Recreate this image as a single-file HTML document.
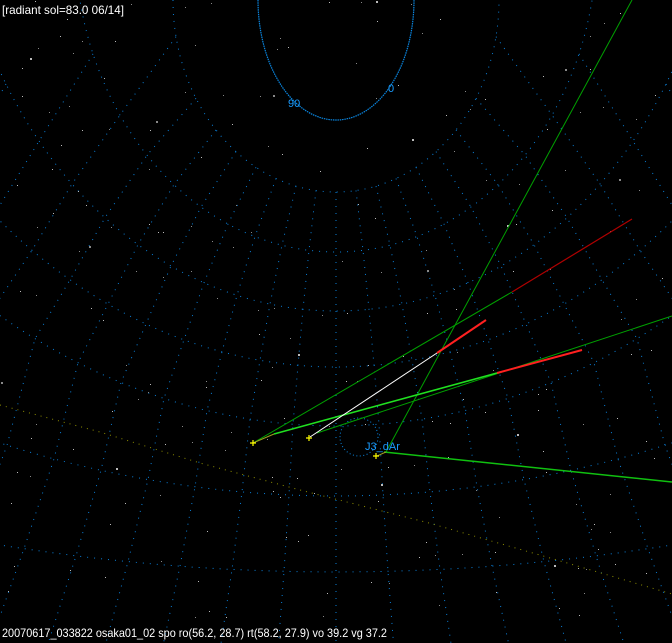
<!DOCTYPE html>
<html><head><meta charset="utf-8">
<style>
html,body{margin:0;padding:0;background:#000;width:672px;height:643px;overflow:hidden}
svg{display:block}
text{font-family:"Liberation Sans",sans-serif}
</style></head>
<body>
<svg id="s" width="672" height="643" viewBox="0 0 672 643" xmlns="http://www.w3.org/2000/svg">
<rect width="672" height="643" fill="#000"/>
<g id="grid" fill="none" stroke="#0a7fd8" stroke-width="1"></g>
<g id="stars" fill="#bbb"></g>
<polyline points="0,405 100,432 200,463 300,490 429,523 557,560 672,594" fill="none" stroke="#8c8c00" stroke-width="1" stroke-dasharray="1 5"/>
<path d="M258,0 A78,120 0 0 0 414,0" fill="none" stroke="#0a86e0" stroke-width="1.2" stroke-dasharray="1.5 0.8"/>
<circle cx="359" cy="437" r="19" fill="none" stroke="#0a86e0" stroke-dasharray="1 2.5"/>
<line x1="632" y1="0" x2="386" y2="452" stroke="#00a000" stroke-width="1"/>
<line x1="253" y1="443" x2="512" y2="292" stroke="#00a000" stroke-width="1"/>
<line x1="512" y1="292" x2="632" y2="219" stroke="#b00000" stroke-width="1.2"/>
<line x1="317" y1="433" x2="672" y2="316" stroke="#00a000" stroke-width="1"/>
<line x1="253" y1="443" x2="274" y2="434" stroke="#a0a020" stroke-width="1"/>
<line x1="274" y1="434" x2="497" y2="373" stroke="#20e020" stroke-width="1.6"/>
<line x1="497" y1="373" x2="582" y2="350" stroke="#ff2020" stroke-width="2"/>
<line x1="437" y1="353" x2="486" y2="320" stroke="#ff2020" stroke-width="2"/>
<line x1="310" y1="437" x2="437" y2="353" stroke="#fff" stroke-width="1"/>
<line x1="384" y1="452" x2="672" y2="482" stroke="#10c010" stroke-width="1.5"/>
<line x1="377" y1="456" x2="386" y2="452" stroke="#a0a020" stroke-width="1"/>
<g stroke="#ffff00" stroke-width="1.2">
<path d="M250,443h6M253,440v6"/><path d="M306,438h6M309,435v6"/><path d="M373,456h6M376,453v6"/>
</g>
<text x="288" y="107" font-size="11" fill="#1a9cff">90</text>
<text x="388" y="92" font-size="11" fill="#1a9cff">0</text>
<text x="365" y="450" font-size="11" fill="#1a9cff">J3_dAr</text>
<text x="2" y="14" font-size="12" fill="#fff" textLength="122" lengthAdjust="spacingAndGlyphs">[radiant sol=83.0 06/14]</text>
<text x="2" y="637" font-size="12" fill="#fff" textLength="385" lengthAdjust="spacingAndGlyphs">20070617_033822 osaka01_02 spo ro(56.2, 28.7) rt(58.2, 27.9) vo 39.2 vg 37.2</text>
</svg>
<script>
(function(){
var NS="http://www.w3.org/2000/svg",g=document.getElementById('grid');
var E=[[0,163,192],[-60,261,312],[-150,383,461],[-300,538,667],[-500,710,926],[-1000,1274,1496],[-1500,2087,2072]];
var D=[20,27,33,38,43,47,52];
function mk(d){var p=document.createElementNS(NS,'path');p.setAttribute('d',d);p.setAttribute('stroke-dasharray','1 6');g.appendChild(p);}
E.forEach(function(e){var d='';for(var t=-90;t<=90;t+=1){var a=t*Math.PI/180;var x=336+e[1]*Math.sin(a),y=e[0]+e[2]*Math.cos(a);d+=(t==-90?'M':'L')+x.toFixed(1)+','+y.toFixed(1);}mk(d);});
function yAt(e,off){var s=off/e[1];if(Math.abs(s)>1)return null;return e[0]+e[2]*Math.sqrt(1-s*s);}
for(var i=-14;i<=14;i++){var d='',st=false;for(var k=0;k<E.length;k++){var off=D[k]*i;var y=yAt(E[k],off);if(y===null||y<-5)continue;var x=336+off;d+=(st?'L':'M')+x.toFixed(1)+','+y.toFixed(1);st=true;}
 var off2=(D[6]+6)*i;d+=(st?'L':'M')+(336+off2).toFixed(1)+',650';mk(d);}
var sg=document.getElementById('stars'),seed=7;function r(){seed=(seed*16807)%2147483647;return seed/2147483647;}
for(var n=0;n<220;n++){var c=document.createElementNS(NS,'rect');var sz=r()<0.08?2:1;c.setAttribute('x',(r()*672).toFixed(0));c.setAttribute('y',(r()*620).toFixed(0));c.setAttribute('width',sz);c.setAttribute('height',sz);c.setAttribute('fill',r()<0.5?'#888':'#bbb');sg.appendChild(c);}
})();
</script>
</body></html>
